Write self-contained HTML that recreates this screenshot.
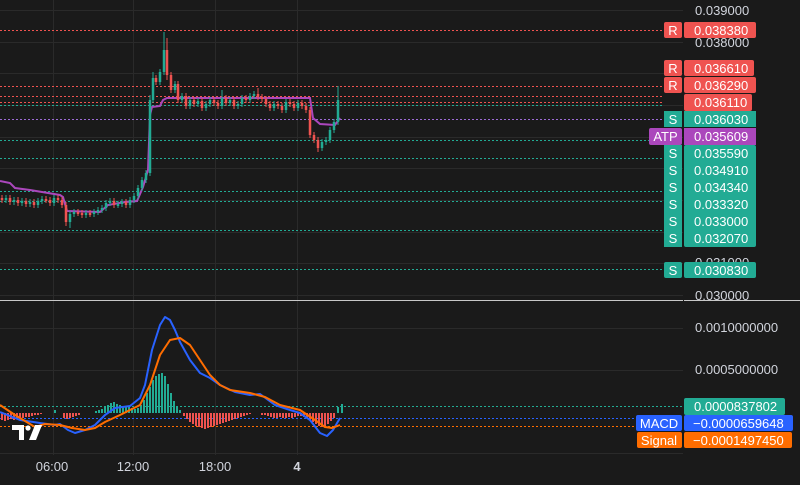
<!DOCTYPE html>
<html><head><meta charset="utf-8"><style>
html,body{margin:0;padding:0;background:#1a1a1a;}
body{width:800px;height:480px;overflow:hidden;font-family:"Liberation Sans",sans-serif;}
</style></head><body>
<svg width="800" height="480" viewBox="0 0 800 480" xmlns="http://www.w3.org/2000/svg" font-family="Liberation Sans, sans-serif">
<rect width="800" height="480" fill="#1a1a1a"/>
<g stroke="#2a2a2a" stroke-width="1">
<path d="M53.5 0V455M133.5 0V455M215.5 0V455M297.5 0V455"/>
<path d="M0 10.5H683M0 42.5H683M0 73.5H683M0 105.5H683M0 137.5H683M0 168.5H683M0 200.5H683M0 232.5H683M0 263.5H683M0 295.5H683"/>
<path d="M0 328.5H683M0 370.5H683M0 453.5H683"/>
</g>
<line x1="0" y1="300.5" x2="800" y2="300.5" stroke="#c8c8c8" stroke-width="1"/>
<g stroke-width="1" stroke-dasharray="2,2" fill="none">
<path d="M0 30.5H663M0 86.5H663M0 96.5H663M0 102.5H663" stroke="#ef5350"/>
<path d="M0 105.5H663M0 140.5H663M0 158.5H663M0 191.5H663M0 201.5H663M0 230.5H663M0 269.5H663" stroke="#22ab94"/>
<path d="M0 119.5H663" stroke="#9c6bd6"/>
<path d="M0 406.5H683" stroke="#22ab94"/>
<path d="M0 418.5H683" stroke="#2962ff"/>
<path d="M0 426.5H683" stroke="#ff6d00"/>
</g>
<polyline fill="none" stroke="#ab47bc" stroke-width="2" points="0,181 10,183 15,188 30,190 60,195 63,197 67,211 100,212 108,205 125,202 137,201 143,187 148,170 150,115 152,107 160,106 163,100 167,98 310,98 313,118 320,124 335,125 340,118"/>
<g fill="none" stroke-width="1">
<path stroke="#ef5350" d="M2 195V203M10 195V205M18 197V206M26 198V207M34 199V208M46 196V203M50 197V206M58 195V203M62 197V208M66 202V226M78 209V216M82 210V218M90 210V217M114 198V208M126 199V208M156 75V85M167 38V80M171 72V93M178 81V103M186 93V109M194 97V107M202 98V111M214 97V106M218 100V109M226 95V106M234 97V109M246 95V103M258 88V100M262 94V102M266 96V107M270 101V111M278 101V109M282 103V113M290 99V107M294 101V111M302 100V109M306 103V113M310 107V138M314 132V143M318 137V152"/>
<path stroke="#22ab94" d="M6 195V203M14 197V205M22 198V206M30 199V207M38 198V208M42 196V204M54 195V206M70 211V228M74 209V217M86 210V218M94 209V217M98 207V215M102 205V213M106 200V211M110 198V206M118 201V208M122 199V207M130 197V208M134 193V203M138 185V199M142 177V191M146 170V183M150 95V176M153 72V103M160 69V85M164 32V75M175 81V93M182 93V103M190 97V109M198 98V107M206 101V111M210 97V107M222 90V109M230 97V106M238 101V109M242 95V107M250 93V103M254 91V99M274 101V111M286 99V113M298 100V111M322 139V151M326 137V145M330 127V143M334 119V133M338 86V125"/>
</g>
<g fill="none" stroke-width="2.5">
<path stroke="#ef5350" d="M2 198V200M10 198V202M18 200V203M26 201V204M34 202V205M46 199V201M50 200V203M58 198V200M62 200V205M66 205V222M78 212V214M82 213V215M90 213V215M114 201V205M126 202V205M156 78V82M167 50V75M171 75V90M178 84V100M186 96V106M194 100V104M202 101V108M214 100V103M218 103V106M226 98V103M234 100V106M246 98V100M258 94V97M262 97V99M266 99V104M270 104V108M278 104V106M282 106V110M290 102V104M294 104V108M302 103V106M306 106V110M310 110V135M314 135V140M318 140V148"/>
<path stroke="#22ab94" d="M6 198V200M14 200V202M22 201V203M30 202V204M38 201V205M42 199V201M54 198V203M70 214V222M74 212V214M86 213V215M94 212V214M98 210V212M102 208V210M106 203V208M110 201V203M118 204V206M122 202V204M130 200V205M134 196V200M138 188V196M142 180V188M146 173V180M150 100V173M153 78V100M160 72V82M164 50V72M175 84V90M182 96V100M190 100V106M198 101V104M206 104V108M210 100V104M222 98V106M230 100V103M238 104V106M242 98V104M250 96V100M254 94V96M274 104V108M286 102V110M298 103V108M322 142V148M326 140V142M330 130V140M334 122V130M338 100V122"/>
</g>
<g fill="none" stroke-width="2">
<path stroke="#22ab94" d="M55 413V410M96 413V411M99 413V410M102 413V409M105 413V407M108 413V405M111 413V403M114 413V402M117 413V404M120 413V405M123 413V406M126 413V406M129 413V407M132 413V408M135 413V409M138 413V408M141 413V405M144 413V400M147 413V393M150 413V387M153 413V380M156 413V376M159 413V374M162 413V373M165 413V376M168 413V384M171 413V393M174 413V401M177 413V406M180 413V410M338 413V407M342 413V404"/>
<path stroke="#ef5350" d="M2 413V420M5 413V421M8 413V420M11 413V419M14 413V420M17 413V419M20 413V418M23 413V418M26 413V417M29 413V417M32 413V416M35 413V415M38 413V415M41 413V414M64 413V418M67 413V419M70 413V418M73 413V417M76 413V416M79 413V415M184 413V416M187 413V419M190 413V422M193 413V424M196 413V426M199 413V427M202 413V428M205 413V429M208 413V428M211 413V427M214 413V426M217 413V425M220 413V424M223 413V423M226 413V422M229 413V421M232 413V420M235 413V419M238 413V418M241 413V417M244 413V416M247 413V415M250 413V414M262 413V415M265 413V415M268 413V416M271 413V417M274 413V418M277 413V418M280 413V417M283 413V418M286 413V418M289 413V417M292 413V418M295 413V417M298 413V416M301 413V416M304 413V417M307 413V418M310 413V420M313 413V422M316 413V424M319 413V426M322 413V427M325 413V426M328 413V424M331 413V421M334 413V418"/>
</g>
<polyline fill="none" stroke="#2962ff" stroke-width="2" stroke-linejoin="round" points="0,412 20,420 40,423 55,425 60,424 68,430 75,433 85,430 95,425 105,415 115,408 130,406 140,398 145,385 152,350 160,325 165,317 170,320 175,330 180,342 190,360 200,373 210,378 220,385 235,392 250,395 260,394 275,405 290,410 300,413 310,420 320,433 327,436 333,430 340,418"/>
<polyline fill="none" stroke="#ff6d00" stroke-width="2" stroke-linejoin="round" points="0,405 15,415 35,427 45,424 60,425 72,428 85,430 95,428 105,422 120,415 140,405 150,385 160,355 170,340 180,338 190,345 200,360 210,375 220,385 230,390 250,393 265,397 280,405 300,410 315,420 325,427 332,428 340,425"/>
<g fill="#ffffff">
<path d="M12 425H24V440H19V430H12Z"/>
<circle cx="28" cy="428" r="2.6"/>
<path d="M35 425H42L36 440H29Z"/>
</g>
<g fill="#d1d4dc" font-size="13">
<text x="695" y="15">0.039000</text>
<text x="695" y="47">0.038000</text>
<text x="695" y="267">0.031000</text>
<text x="695" y="300">0.030000</text>
<text x="695" y="332">0.0010000000</text>
<text x="695" y="374">0.0005000000</text>
<text x="52" y="471" text-anchor="middle">06:00</text>
<text x="133" y="471" text-anchor="middle">12:00</text>
<text x="215" y="471" text-anchor="middle">18:00</text>
<text x="297" y="471" text-anchor="middle" font-weight="bold">4</text>
</g>
<g font-size="13" fill="#fff">
<g fill="#ef5350">
<rect x="664" y="22" width="18" height="16" rx="2"/><rect x="684" y="22" width="72" height="16" rx="2"/>
<rect x="664" y="60" width="18" height="16" rx="2"/><rect x="684" y="60" width="70" height="16" rx="2"/>
<rect x="664" y="77" width="18" height="16" rx="2"/><rect x="684" y="77" width="72" height="16" rx="2"/>
<rect x="684" y="94" width="68" height="17" rx="2"/>
</g>
<g fill="#22ab94">
<rect x="664" y="111" width="18" height="16"/><rect x="684" y="111" width="72" height="16"/>
<rect x="664" y="145" width="18" height="102"/><rect x="684" y="145" width="72" height="102" rx="2"/>
<rect x="664" y="262" width="18" height="16" rx="2"/><rect x="684" y="262" width="72" height="16" rx="2"/>
<rect x="684" y="398" width="101" height="17" rx="2"/>
</g>
<g fill="#ab47bc"><rect x="649" y="128" width="33" height="17" rx="2"/><rect x="684" y="128" width="72" height="17"/></g>
<g fill="#2962ff"><rect x="636" y="415" width="46" height="16" rx="2"/><rect x="684" y="415" width="109" height="16" rx="2"/></g>
<g fill="#ff6d00"><rect x="637" y="432" width="45" height="16" rx="2"/><rect x="684" y="432" width="108" height="16" rx="2"/></g>
<g text-anchor="middle">
<text x="673" y="35">R</text><text x="673" y="73">R</text><text x="673" y="90">R</text>
<text x="673" y="124">S</text><text x="665.5" y="141">ATP</text>
<text x="673" y="158">S</text><text x="673" y="175">S</text><text x="673" y="192">S</text><text x="673" y="209">S</text><text x="673" y="226">S</text><text x="673" y="243">S</text><text x="673" y="275">S</text>
<text x="659" y="428">MACD</text><text x="659" y="445">Signal</text>
</g>
<text x="694" y="35">0.038380</text>
<text x="694" y="73">0.036610</text>
<text x="694" y="90">0.036290</text>
<text x="694" y="107">0.036110</text>
<text x="694" y="124">0.036030</text>
<text x="694" y="141">0.035609</text>
<text x="694" y="158">0.035590</text>
<text x="694" y="175">0.034910</text>
<text x="694" y="192">0.034340</text>
<text x="694" y="209">0.033320</text>
<text x="694" y="226">0.033000</text>
<text x="694" y="243">0.032070</text>
<text x="694" y="275">0.030830</text>
<text x="694" y="411">0.0000837802</text>
<text x="693" y="428">−0.0000659648</text>
<text x="693" y="445">−0.0001497450</text>
</g>
<line x1="683.5" y1="22" x2="683.5" y2="448" stroke="#1a1a1a" stroke-width="1"/>
</svg>
</body></html>
